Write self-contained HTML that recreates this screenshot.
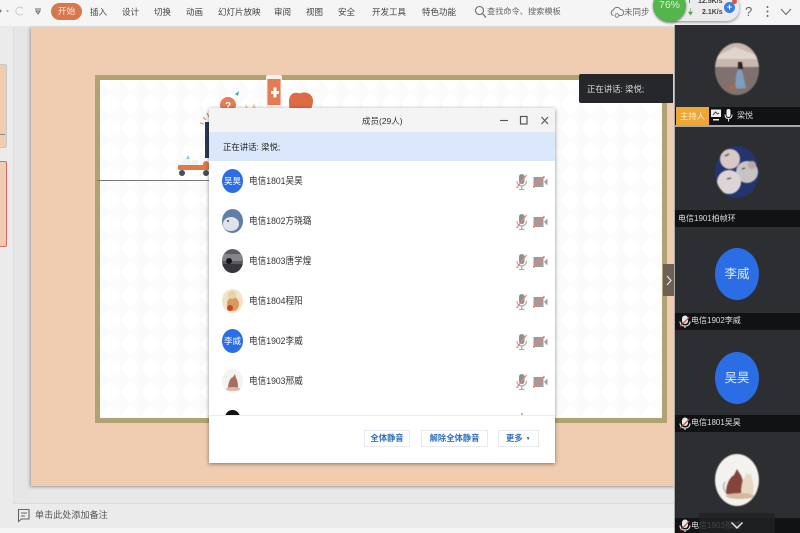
<!DOCTYPE html>
<html lang="zh">
<head>
<meta charset="utf-8">
<title>成员</title>
<style>
html,body{margin:0;padding:0;width:800px;height:533px;overflow:hidden;background:#e8e8e8}
body{position:relative;font-family:"Liberation Sans","Noto Sans CJK SC",sans-serif}
.a{position:absolute;white-space:nowrap}
.t{position:absolute;white-space:nowrap;font-size:8.5px;line-height:12px;color:#444;top:6px;filter:blur(.3px)}
.n{position:absolute;left:249px;font-size:9.6px;line-height:14px;color:#333;transform:scaleX(.9);transform-origin:0 50%;filter:blur(.3px)}
.av{position:absolute;left:222px;width:21px;height:24px;border-radius:50%;overflow:hidden;color:#fff;font-size:8.5px;line-height:24px;text-align:center;filter:blur(.3px)}
.blue{background:#2a6de4}
.mic{position:absolute;left:515px;width:13px;height:18px;filter:blur(.2px)}
.cam{position:absolute;left:533px;width:15px;height:12px;filter:blur(.2px)}
.bar{position:absolute;left:675px;width:125px;background:#111214}
.pn{position:absolute;color:#ddd;font-size:8px;line-height:14px;filter:blur(.25px)}
.pa{position:absolute;left:715px;width:44px;height:52px;border-radius:50%;overflow:hidden;filter:blur(.4px)}
.pb{position:absolute;left:715px;width:44px;height:52px;border-radius:50%;overflow:hidden;background:#2a6de4;color:#dbe7fb;font-size:12.500px;line-height:52px;text-align:center}
.btn{position:absolute;top:430px;height:15px;border:1px solid #e6ebf1;color:#2f6fc0;font-size:8.3px;line-height:15px;text-align:center;background:#fff;filter:blur(.25px);font-weight:bold}
</style>
</head>
<body>
<svg width="0" height="0" style="position:absolute">
<defs>
<symbol id="mic" viewBox="0 0 13 18">
<rect x="4" y="1" width="5.500" height="10" rx="2.700" fill="#8f8f8f"/>
<path d="M2 8c0 3 2 5 4.700 5s4.700-2 4.700-5M6.700 13v3M4 16.500h5.500" fill="none" stroke="#a5a5a5" stroke-width="1.100"/>
<path d="M11.500 2L1.500 15" stroke="#e08a84" stroke-width="1.400"/>
</symbol>
<symbol id="cam" viewBox="0 0 15 12">
<rect x="0.500" y="1" width="10" height="10" fill="#9c9c9c"/>
<path d="M11 6L14.500 2.500V9.500Z" fill="#9c9c9c"/>
<path d="M0 11.500L11.500 .5" stroke="#ec7f75" stroke-width="1.800"/>
</symbol>
<symbol id="mutew" viewBox="0 0 13 14">
<rect x="4" y="0.500" width="6" height="8.500" rx="3" fill="#e8e8e8"/>
<path d="M2 6.500c0 3 2 4.500 5 4.500s5-1.500 5-4.500M7 11v2" fill="none" stroke="#e8e8e8" stroke-width="1.100"/>
<path d="M11.500 2L2 11.500" stroke="#b8453d" stroke-width="1.200"/>
</symbol>
<pattern id="tri" width="20" height="24" patternUnits="userSpaceOnUse">
<path d="M0 0L10 12L0 24Z" fill="#fafafa"/>
<path d="M20 0L10 12L20 24Z" fill="#fcfcfc"/>
</pattern>
</defs>
</svg>

<!-- toolbar -->
<div class="a" style="left:0;top:0;width:800px;height:26px;background:#f5f5f5"></div>
<svg class="a" style="left:0;top:5px" width="46" height="14" viewBox="0 0 46 14">
<circle cx="0" cy="6" r="1.500" fill="#777"/>
<path d="M6 5.500l1.500 1.500 1.500-1.500" fill="#888"/>
<path d="M23 3.500a4 4 0 1 0 0 5" fill="none" stroke="#c8c8c8" stroke-width="1"/>
<path d="M35 4h6M36 6l2 3 2-3z" fill="none" stroke="#666" stroke-width="1"/>
</svg>
<div class="a" style="left:51px;top:3px;width:31px;height:17px;border-radius:9px;background:#d9764a;color:#fbe6d8;font-size:8.800px;line-height:17px;text-align:center;filter:blur(.3px)">开始</div>
<div class="t" style="left:90px">插入</div>
<div class="t" style="left:122px">设计</div>
<div class="t" style="left:154px">切换</div>
<div class="t" style="left:186px">动画</div>
<div class="t" style="left:218px">幻灯片放映</div>
<div class="t" style="left:274px">审阅</div>
<div class="t" style="left:306px">视图</div>
<div class="t" style="left:338px">安全</div>
<div class="t" style="left:372px">开发工具</div>
<div class="t" style="left:422px">特色功能</div>
<svg class="a" style="left:474px;top:5px" width="13" height="14" viewBox="0 0 13 14"><circle cx="5.500" cy="5.500" r="4" fill="none" stroke="#666" stroke-width="1.100"/><path d="M8.500 8.500L12 12.500" stroke="#666" stroke-width="1.200"/></svg>
<div class="t" style="left:487px;color:#666;font-size:8.200px">查找命令、搜索模板</div>
<svg class="a" style="left:610px;top:6px" width="14" height="12" viewBox="0 0 14 12"><path d="M3.500 9.500a2.800 2.800 0 0 1 0-5.500a3.800 3.800 0 0 1 7-.5a3 3 0 0 1 .5 6H9" fill="none" stroke="#777" stroke-width="1"/><circle cx="7" cy="9.500" r="1.800" fill="none" stroke="#777" stroke-width=".9"/></svg>
<div class="t" style="left:624px;color:#666">未同步</div>

<!-- left rail -->
<div class="a" style="left:0;top:27px;width:13px;height:501px;background:#ebebeb;border-right:1px solid #dedede"></div>
<div class="a" style="left:14px;top:27px;width:17px;height:476px;background:#e6e6e6"></div>
<div class="a" style="left:-2px;top:64px;width:7px;height:82px;background:#f0ccb0;border:1px solid #c9c9c9;border-radius:2px"></div>
<div class="a" style="left:0;top:134px;width:5px;height:1px;background:#888"></div>
<div class="a" style="left:-2px;top:161px;width:7px;height:84px;background:#f0ccb0;border:1px solid #d9695e;border-radius:2px"></div>

<!-- slide -->
<div class="a" style="left:31px;top:27px;width:644px;height:459px;background:#f0ccb0;box-shadow:-1px 1px 3px #999"></div>
<div class="a" style="left:95px;top:75px;width:562px;height:338px;border:5px solid #b0a272;background:#fff">
<svg width="562" height="338" style="display:block"><rect width="562" height="338" fill="url(#tri)"/></svg>
</div>
<div class="a" style="left:97px;top:180px;width:112px;height:1px;background:#777"></div>

<!-- illustration -->
<svg class="a" style="left:170px;top:72px;filter:blur(.35px)" width="150" height="112" viewBox="0 0 150 112">
<rect x="96" y="3" width="16" height="33" rx="2" fill="#f2f2ee"/>
<rect x="97.500" y="7" width="13" height="26" fill="#e47b52"/>
<path d="M101 19h2.500v-3.500h3V19H109v3h-2.500v3.500h-3V22H101z" fill="#fff"/>
<path d="M119 30c0-9 6-10 9-9 1 .5 2 .5 3 0 4-1.500 12 0 12 8 0 3-1 6-2 8h-21c-1-2-1-4-1-7z" fill="#dd6b43"/>
<circle cx="58" cy="33" r="8" fill="#e47e56"/>
<text x="55" y="37" font-size="10" font-weight="bold" fill="#fff" font-family="Liberation Sans">?</text>
<path d="M65 22l4-3-1 5z" fill="#4da9b5"/>
<path d="M76 32l2 4-3 0zM84 31l2 5-4 0z" fill="#efcfa9"/>
<path d="M36 48l-3-3M34 52l-4-1M39 45l-2-4" stroke="#e58a52" stroke-width="1"/>
<path d="M35 50h4v36h-4z" fill="#2c3a54"/>
<rect x="8" y="93" width="31" height="5" rx="1" fill="#df7a40"/>
<path d="M10 93l4-6h6l2 6zM22 88h6v5h-6z" fill="#eef3f3"/>
<path d="M16 87l2-4 2 4z" fill="#8fd0d8"/>
<circle cx="36" cy="92" r="3" fill="#df7a40"/>
<circle cx="12" cy="101" r="3" fill="#45505f"/>
<circle cx="36" cy="101" r="3" fill="#45505f"/>
</svg>

<!-- arrow handle -->
<div class="a" style="left:663px;top:264px;width:12px;height:32px;background:#6d6154"></div>
<svg class="a" style="left:665px;top:275px" width="8" height="11" viewBox="0 0 8 11"><path d="M2 1l4 4.500L2 10" fill="none" stroke="#eee" stroke-width="1.100"/></svg>

<!-- tooltip -->
<div class="a" style="left:579px;top:74px;width:94px;height:29px;background:#25272a;border-radius:2px 0 0 2px"></div>
<div class="a" style="left:587px;top:82px;color:#ddd;font-size:8.400px;line-height:14px;filter:blur(.25px)">正在讲话: 梁悦;</div>

<!-- dialog -->
<div class="a" style="left:209px;top:108px;width:346px;height:355px;background:#fff;box-shadow:0 1px 4px rgba(0,0,0,.45)"></div>
<div class="a" style="left:209px;top:108px;width:346px;height:24px;background:#f4f4f4"></div>
<div class="a" style="left:362px;top:114px;font-size:8.500px;line-height:14px;color:#333;filter:blur(.25px)">成员(29人)</div>
<svg class="a" style="left:498px;top:114px" width="54" height="13" viewBox="0 0 54 13">
<path d="M2 6.500h8" stroke="#555" stroke-width="1.100"/>
<rect x="22.500" y="2.500" width="6.500" height="7.500" fill="none" stroke="#555" stroke-width="1.200"/>
<path d="M43.500 3l6.500 7M50 3l-6.500 7" stroke="#555" stroke-width="1.100"/>
</svg>
<div class="a" style="left:209px;top:132px;width:346px;height:29px;background:#dbe7fb"></div>
<div class="a" style="left:223px;top:140px;font-size:8.400px;line-height:14px;color:#222;filter:blur(.25px)">正在讲话: 梁悦;</div>

<!-- rows -->
<div class="av blue" style="top:169px">吴昊</div>
<div class="n" style="top:175px">电信1801吴昊</div>
<svg class="mic" style="top:173px"><use href="#mic"/></svg><svg class="cam" style="top:176px"><use href="#cam"/></svg>

<div class="av" style="top:209px;background:#5f7ea8"><svg width="21" height="24" viewBox="0 0 21 24"><ellipse cx="9" cy="15" rx="8" ry="7" fill="#dfe4e8"/><circle cx="6" cy="12" r="1" fill="#445"/></svg></div>
<div class="n" style="top:215px">电信1802方晓璐</div>
<svg class="mic" style="top:213px"><use href="#mic"/></svg><svg class="cam" style="top:216px"><use href="#cam"/></svg>

<div class="av" style="top:249px;background:#5c5b60"><svg width="21" height="24" viewBox="0 0 21 24"><rect y="15" width="21" height="9" fill="#38383c"/><rect y="5" width="21" height="7" fill="#85848a"/><circle cx="7" cy="12" r="3" fill="#16161a"/></svg></div>
<div class="n" style="top:255px">电信1803唐学煌</div>
<svg class="mic" style="top:253px"><use href="#mic"/></svg><svg class="cam" style="top:256px"><use href="#cam"/></svg>

<div class="av" style="top:289px;background:#efe3c8"><svg width="21" height="24" viewBox="0 0 21 24"><ellipse cx="11" cy="15" rx="6" ry="7" fill="#d89a62"/><circle cx="8" cy="19" r="3" fill="#c3452f"/><circle cx="10" cy="6" r="4" fill="#e5d49e"/></svg></div>
<div class="n" style="top:295px">电信1804程阳</div>
<svg class="mic" style="top:293px"><use href="#mic"/></svg><svg class="cam" style="top:296px"><use href="#cam"/></svg>

<div class="av blue" style="top:329px">李威</div>
<div class="n" style="top:335px">电信1902李威</div>
<svg class="mic" style="top:333px"><use href="#mic"/></svg><svg class="cam" style="top:336px"><use href="#cam"/></svg>

<div class="av" style="top:369px;background:#f5f2f0"><svg width="21" height="24" viewBox="0 0 21 24"><path d="M6 20c0-6 2-11 5-12l2-3 1 4c2 3 2 7 2 11z" fill="#a56f60"/><ellipse cx="11" cy="20" rx="7" ry="2" fill="#d9b7ab"/></svg></div>
<div class="n" style="top:375px">电信1903邢威</div>
<svg class="mic" style="top:373px"><use href="#mic"/></svg><svg class="cam" style="top:376px"><use href="#cam"/></svg>

<div class="a" style="left:222px;top:410px;width:21px;height:5px;overflow:hidden"><div style="width:15px;height:15px;margin:0 3px;border-radius:50%;background:#111"></div></div>
<div class="a" style="left:521px;top:413px;width:2px;height:2px;background:#bbb"></div>

<!-- footer -->
<div class="a" style="left:209px;top:415px;width:346px;height:1px;background:#ececec"></div>
<div class="btn" style="left:364px;width:44px">全体静音</div>
<div class="btn" style="left:421px;width:65px">解除全体静音</div>
<div class="btn" style="left:498px;width:39px;text-align:left;text-indent:7px">更多<span style="font-size:5px;vertical-align:1px;margin-left:3px">▼</span></div>

<!-- notes -->
<div class="a" style="left:13px;top:503px;width:662px;height:25px;background:#ebebeb;border-top:1px solid #dcdcdc;box-sizing:border-box"></div>
<div class="a" style="left:0;top:528px;width:675px;height:5px;background:#f5f5f5"></div>
<svg class="a" style="left:17px;top:508px" width="14" height="15" viewBox="0 0 14 15"><path d="M1.500 1.500h10.500v9.500H4.500L1.500 13.500z" fill="none" stroke="#666" stroke-width="1.100"/><path d="M4 5h6M4 8h4" stroke="#666" stroke-width="1"/></svg>
<div class="a" style="left:35px;top:509px;font-size:9.100px;line-height:13px;color:#555;filter:blur(.25px)">单击此处添加备注</div>

<!-- right panel -->
<div class="a" style="left:674px;top:25px;width:126px;height:508px;background:#2c2e31;border-left:1px solid #aaa;box-sizing:border-box"></div>
<div class="a" style="left:674px;top:125px;width:126px;height:2px;background:#a8a8a8"></div>

<div class="pa" style="top:43px;background:#8d7a72">
<svg width="44" height="52" viewBox="0 0 44 52"><rect width="44" height="24" fill="#c9b8ae"/><path d="M0 14L20 4l24 9v3H0z" fill="#e0d5cc"/><rect y="24" width="44" height="28" fill="#7f716f"/><path d="M24 24c3 2 4 7 5 12l2 9-11 1 1-14z" fill="#7f9dbe"/><path d="M23 19h4l1 7h-5z" fill="#2a2322"/><path d="M10 44l10-3 2 6H12z" fill="#a06a58"/></svg>
</div>
<div class="bar" style="top:107px;height:18px"></div>
<div class="a" style="left:676px;top:107px;width:33px;height:18px;background:#eea734;color:#fbeeda;font-size:8.300px;line-height:18px;text-align:center;filter:blur(.25px)">主持人</div>
<svg class="a" style="left:710px;top:108px" width="26" height="15" viewBox="0 0 26 15"><rect x="1" y="1.500" width="10" height="7.500" fill="#eee"/><path d="M3 11h6v1.500H3z" fill="#eee"/><path d="M3 7l2.500-3 2 2L9 5" fill="none" stroke="#222" stroke-width=".8"/><rect x="16.500" y="1" width="4" height="8" rx="2" fill="#eee"/><path d="M15 6.500c0 3 1.500 4 3.500 4s3.500-1 3.500-4M18.500 10.500v3" fill="none" stroke="#eee" stroke-width="1"/></svg>
<div class="pn" style="left:737px;top:109px">梁悦</div>

<div class="pa" style="top:146px;background:#25346e">
<svg width="44" height="52" viewBox="0 0 44 52"><circle cx="15" cy="13" r="10" fill="#d9c9c5"/><circle cx="32" cy="26" r="11" fill="#c8c3c5"/><circle cx="14" cy="36" r="12" fill="#dcd4d6"/><path d="M0 42L12 52H0zM44 38L30 52h14z" fill="#eee"/><circle cx="37" cy="19" r="4" fill="#b9aaa0"/><path d="M10 10l4-2M27 23l3-1M12 33l4-1" stroke="#333" stroke-width="1"/></svg>
</div>
<div class="bar" style="top:210px;height:17px"></div>
<div class="pn" style="left:678px;top:212px">电信1901柏帧环</div>

<div class="pb" style="top:248px">李威</div>
<div class="bar" style="top:313px;height:17px"></div>
<svg class="a" style="left:678px;top:315px" width="13" height="14"><use href="#mutew"/></svg>
<div class="pn" style="left:691px;top:314px">电信1902李威</div>

<div class="pb" style="top:352px">吴昊</div>
<div class="bar" style="top:415px;height:17px"></div>
<svg class="a" style="left:678px;top:417px" width="13" height="14"><use href="#mutew"/></svg>
<div class="pn" style="left:691px;top:416px">电信1801吴昊</div>

<div class="pa" style="top:454px;background:#f4f2ef">
<svg width="44" height="52" viewBox="0 0 44 52"><path d="M11 40c0-9 3-16 8-19l3-6 3 5c3 4 4 12 3 20z" fill="#84443c"/><path d="M26 40c0-8 1-14 4-17l1-4 3 2 2-2 1 6c2 4 2 10 1 15z" fill="#e9d9c4"/><ellipse cx="25" cy="42" rx="14" ry="3" fill="#d6b89d"/><path d="M11 38c-3-2-3-7-1-10" fill="none" stroke="#998" stroke-width="1"/></svg>
</div>
<div class="bar" style="top:518px;height:15px"></div>
<svg class="a" style="left:678px;top:519px" width="13" height="14"><use href="#mutew"/></svg>
<div class="pn" style="left:691px;top:519px">电信1903邢威</div>
<div class="a" style="left:699px;top:513px;width:76px;height:20px;background:rgba(32,34,37,.82)"></div>
<svg class="a" style="left:730px;top:521px" width="14" height="10" viewBox="0 0 14 10"><path d="M1.500 1.500L7 7l5.500-5.500" fill="none" stroke="#e5e5e5" stroke-width="1.500"/></svg>

<!-- network widget -->
<div class="a" style="left:672px;top:-6px;width:67px;height:27px;background:#ececec;border-radius:0 12px 12px 0;box-shadow:0 1px 3px rgba(0,0,0,.45)"></div>
<div class="a" style="left:698px;top:-3px;font-size:7px;line-height:10px;color:#444;font-weight:bold">12.5K/s</div>
<div class="a" style="left:702px;top:8px;font-size:7px;line-height:10px;color:#444;font-weight:bold">2.1K/s</div>
<div class="a" style="left:689px;top:-1px;width:1px;height:4px;background:#d9534f"></div>
<svg class="a" style="left:688px;top:8px" width="5" height="8" viewBox="0 0 5 8"><path d="M2.500 0v5M0.500 4l2 3 2-3z" fill="#45a84f" stroke="#45a84f" stroke-width=".6"/></svg>
<div class="a" style="left:653px;top:-11px;width:33px;height:33px;border-radius:50%;background:#54b54c;box-shadow:0 1px 2px rgba(0,0,0,.5);color:#dff2dc;font-size:10.500px;line-height:33px;text-align:center">76%</div>
<div class="a" style="left:724px;top:2px;width:11px;height:11px;border-radius:50%;background:#3a7fe0;color:#fff;font-size:9px;line-height:11px;text-align:center;font-weight:bold">+</div>
<div class="a" style="left:732px;top:-1px;width:5px;height:5px;border-radius:50%;background:#d9534f"></div>
<div class="a" style="left:745px;top:3px;font-size:13px;line-height:18px;color:#666">?</div>
<svg class="a" style="left:765px;top:5px" width="5" height="13" viewBox="0 0 5 13"><circle cx="2.500" cy="2" r="1" fill="#666"/><circle cx="2.500" cy="6.500" r="1" fill="#666"/><circle cx="2.500" cy="11" r="1" fill="#666"/></svg>
<svg class="a" style="left:780px;top:8px" width="12" height="8" viewBox="0 0 12 8"><path d="M1 1l5 5.500L11 1" fill="none" stroke="#666" stroke-width="1"/></svg>
</body>
</html>
